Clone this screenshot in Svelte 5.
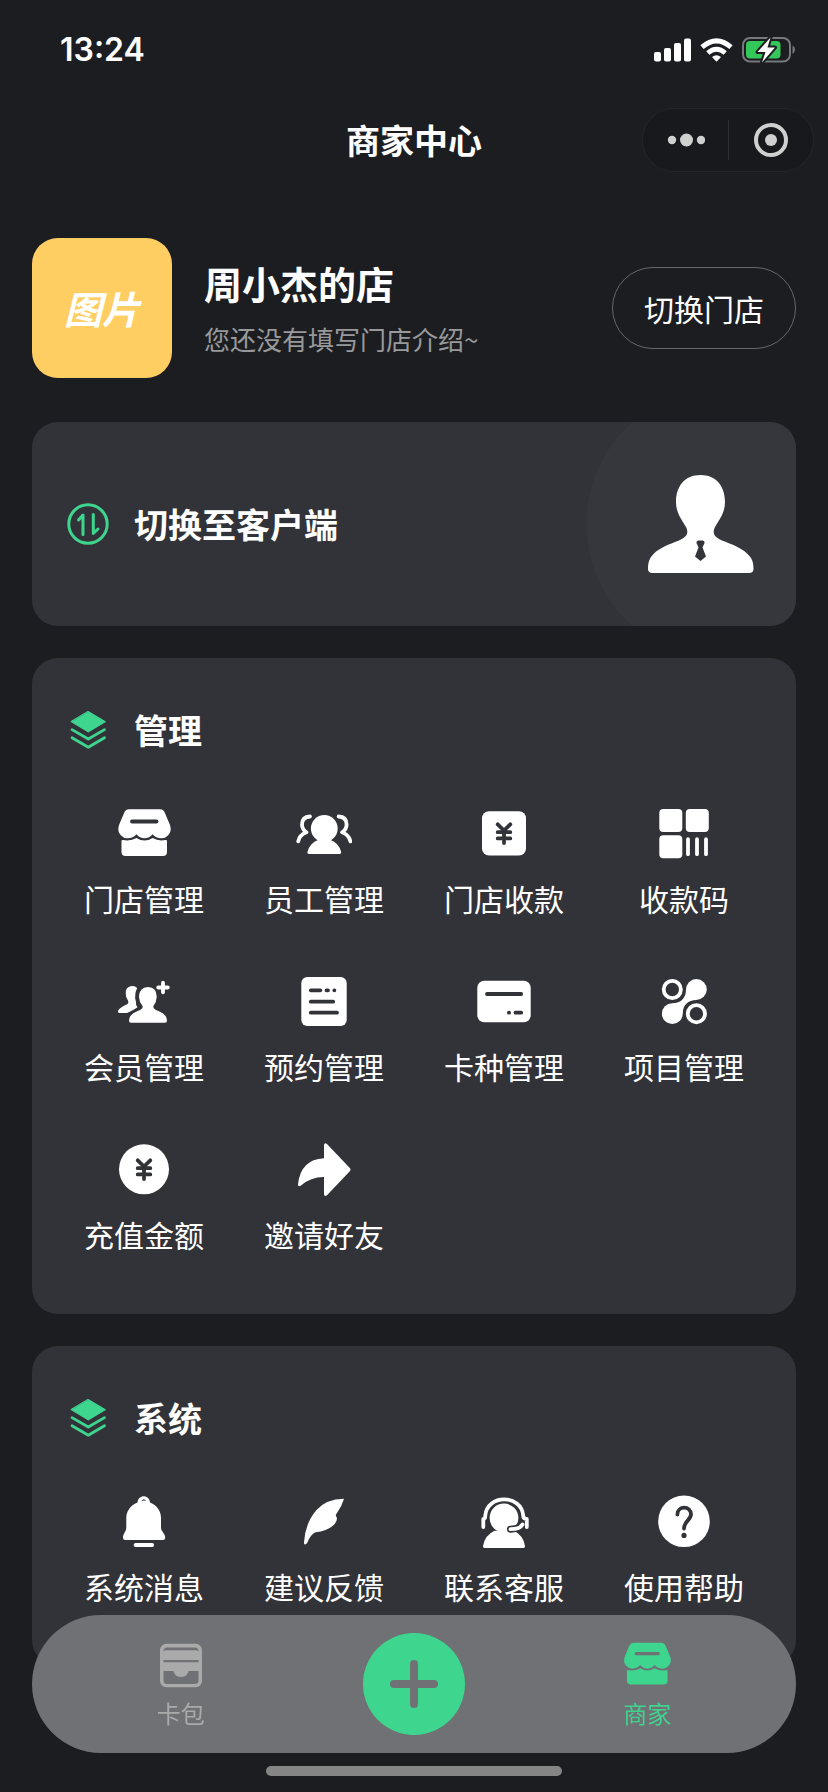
<script lang="ts">
  const manage = [
    { label: "门店管理", icon: "shop" },
    { label: "员工管理", icon: "staff" },
    { label: "门店收款", icon: "cash" },
    { label: "收款码", icon: "code" },
    { label: "会员管理", icon: "member" },
    { label: "预约管理", icon: "booking" },
    { label: "卡种管理", icon: "card" },
    { label: "项目管理", icon: "project" },
    { label: "充值金额", icon: "recharge" },
    { label: "邀请好友", icon: "share" },
  ];

  const system = [
    { label: "系统消息", icon: "bell" },
    { label: "建议反馈", icon: "feather" },
    { label: "联系客服", icon: "service" },
    { label: "使用帮助", icon: "help" },
  ];

  const groups = [
    { title: "管理", items: manage },
    { title: "系统", items: system },
  ];

  let tab = $state("shop");
</script>

{#snippet yen()}
  <path class="hole" d="M21.7 20.3L28 26.5L34.3 20.3M21.7 28.2H34.3M21.7 34.4H34.3M28 27V39" />
{/snippet}

{#snippet glyph(name: string)}
  <svg class="glyph" viewBox="0 0 56 56" aria-hidden="true">
    {#if name === "shop"}
      <path d="M13 5.3H44Q47.3 5.3 48.7 8.5L54 21Q56 27 52.2 31.2Q49.5 34.3 45.5 34.3Q39.8 34.3 36.6 30.3Q33.3 34.3 28.5 34.3Q23.7 34.3 20.5 30.3Q17.2 34.3 11.5 34.3Q7.5 34.3 4.8 31.2Q1 27 3 21L8.3 8.5Q9.7 5.3 13 5.3Z" />
      <path d="M5.5 37Q5.5 35.8 7 36Q14.5 37.5 20.5 34Q28.5 39 36.6 34Q42.5 37.5 49.5 36Q51 35.8 51 37V48Q51 52 47 52H9.5Q5.5 52 5.5 48Z" />
      <path class="hole" d="M16 17.5H40.5" />
    {:else if name === "staff"}
      <circle cx="28.3" cy="24.5" r="13.4" />
      <path d="M11.4 48Q14 38.5 23 35.5H33.6Q42.6 38.5 45.2 48Q45.5 50 43.5 50H13Q11 50 11.4 48Z" />
      <path class="line" d="M14 12.5Q6 13 6 20.5Q6 25.5 10.5 28.3Q3.5 31 2.2 37.3M42.6 12.5Q50.6 13 50.6 20.5Q50.6 25.5 46.1 28.3Q53 31 54.4 37.3" />
    {:else if name === "cash"}
      <rect x="6" y="7.2" width="44" height="44.4" rx="7" />
      {@render yen()}
    {:else if name === "code"}
      <rect x="3.3" y="5" width="23" height="23" rx="4" />
      <rect x="29.8" y="5" width="23" height="23" rx="4" />
      <rect x="3.3" y="31.3" width="23" height="23" rx="4" />
      <path class="line" d="M32 35.2V50.2M41 35.2V50.2M50 35.2V50.2" />
    {:else if name === "member"}
      <path d="M20.5 15.5Q18 13.5 14.5 14.2Q9.5 15.5 9.7 21Q9.5 25 12 28.5Q13.5 31.5 9.5 33Q2 36.5 2 39.5Q2 41 3.5 41H11Q15 39.5 21.5 35.3Q19.5 33.5 20 30Q18.5 26 19.5 20.5Q20 18 21.2 16.5Z" />
      <path d="M32 15Q41 15.5 40.7 25Q40.5 30 37.5 34Q36.5 36.5 40 38Q51 42 51 48.5Q51 50.7 49 50.7H15Q13 50.7 13 48.5Q13 42 24 38Q27.5 36.5 26.5 34Q23.2 30 23 25Q23 15.5 32 15Z" />
      <path class="line" d="M42.2 15.5H51.8M47 10.7V20.3" />
    {:else if name === "booking"}
      <rect x="5.3" y="5" width="45.4" height="49" rx="6" />
      <path class="hole" d="M14.8 18.3H24.3M30.5 18.3H32M38.3 18.3H38.4M14.8 29.7H37.2M14.8 40.7H41" />
    {:else if name === "card"}
      <rect x="1.3" y="8.7" width="53.4" height="41.6" rx="7" />
      <path class="hole" d="M11 22H45.2M32.9 40.7H33.1M39.5 40.7H45.2" />
    {:else if name === "project"}
      <circle class="line" cx="16.3" cy="17.5" r="8.6" />
      <circle class="line" cx="40.4" cy="41.7" r="8.6" />
      <circle cx="40.4" cy="17.5" r="10.4" />
      <circle cx="16.3" cy="41.7" r="10.4" />
      <path d="M30 17.5C30 26 25 31.3 16.3 31.3L26.7 41.7C26.7 33 32 27.9 40.4 27.9Z" />
    {:else if name === "recharge"}
      <circle cx="28" cy="29.3" r="25" />
      {@render yen()}
    {:else if name === "share"}
      <path d="M28 5Q28.5 2.2 31 4L53.8 28Q55.2 29.7 53.8 31.3L31 55.2Q28.5 57 28 54.5V37Q15 36.8 5 45.5Q2 47.3 2 44.5Q4.5 19.5 28 18.3Z" />
    {:else if name === "bell"}
      <path d="M21.5 10.5C22 2 33.5 2 34 10.5C41.5 13.5 45 19.5 45 26V35.5C45 39.5 49.2 41.5 49.2 45.5Q49.2 48 46.5 48H9.5Q7 48 7 45.5C7 41.5 10.3 39.5 10.3 35.5V26C10.3 19.5 14 13.5 21.5 10.5ZM25.5 9Q27.7 8.2 30 9Q29 7.2 27.7 7.2Q26.5 7.2 25.5 9Z" />
      <path class="line" d="M19.6 53H36.2" />
    {:else if name === "feather"}
      <path d="M48 6.7Q30 7 20.5 18Q9 31.5 8 50.5Q8 54 11 51.2Q14.5 42.5 19.5 40.3Q31 39 36.5 34Q42 29 40.6 25Q38.8 23.5 41 21Q45.5 15 48 6.7Z" />
    {:else if name === "service"}
      <circle cx="28" cy="26" r="14.4" />
      <path d="M7 54.2Q8.5 43.5 18.5 38.8H38Q47.5 43.5 49 54.2Q49.2 56 47.5 56H8.5Q6.8 56 7 54.2Z" />
      <path class="ring" d="M46 31.8Q44 36.8 34.5 37.2" />
      <path class="line" d="M7.3 35V27Q9.3 27 9.3 23.5C11 2 45.5 2 47.2 23.5Q47.2 27 50.8 27V35M46.5 32.5Q44 37 34.5 37.2" />
    {:else if name === "help"}
      <circle cx="28" cy="29.3" r="25.8" />
      <path class="hole" d="M21.4 22.5C21.4 13.5 35 13.5 35 22.3C35 28 28 29 28 36.5" />
      <circle class="dot" cx="28" cy="43.4" r="2.6" />
    {:else if name === "wallet"}
      <rect x="4.5" y="6.5" width="47" height="48.7" rx="7" />
      <path class="dot" d="M8.4 15Q8.4 10.7 12.4 10.7H43.6Q47.6 10.7 47.6 15Q46.6 13.6 44.6 13.6H11.4Q9.4 13.6 8.4 15ZM8.4 24.6H47.6V27.2H8.4ZM8.4 37H19.5C20.5 40 22 43.7 28 43.7S35.5 40 36.5 37H47.6V47.5Q47.6 51.5 43.6 51.5H12.4Q8.4 51.5 8.4 47.5Z" />
    {/if}
  </svg>
{/snippet}

<div class="page">
  <div class="status">
    <span class="time">13:24</span>
    <div class="signals">
      <svg width="37" height="24" viewBox="0 0 37 24" fill="#fff" aria-hidden="true">
        <rect x="0" y="14" width="7" height="9.5" rx="2" />
        <rect x="10" y="10" width="7" height="13.5" rx="2" />
        <rect x="20" y="5" width="7" height="18.5" rx="2" />
        <rect x="30" y="0.5" width="7" height="23" rx="2" />
      </svg>
      <svg width="33" height="24" viewBox="0 0 33 24" fill="none" stroke="#fff" aria-hidden="true">
        <path d="M2 9.2Q16.5 -3.5 31 9.2" stroke-width="5" />
        <path d="M7.8 15Q16.5 7.5 25.2 15" stroke-width="4.8" />
        <path d="M12 19Q16.5 15.5 21 19L16.5 23.7Z" fill="#fff" stroke="none" />
      </svg>
      <svg width="54" height="28" viewBox="0 0 54 28" aria-hidden="true">
        <rect x="1" y="2" width="47" height="23.5" rx="7" fill="none" stroke="#77787b" stroke-width="2" />
        <path d="M50.5 9.5Q53 10.5 53 13.7T50.5 18Z" fill="#77787b" />
        <rect x="4" y="5" width="34.5" height="17.5" rx="4" fill="#34c759" />
        <path d="M28.5 1.5L15.5 16H23.5L20 26.5L33 11.5H25.5Z" fill="#fff" stroke="#1c1d21" stroke-width="4" stroke-linejoin="round" paint-order="stroke" />
      </svg>
    </div>
  </div>

  <header>
    <h1>商家中心</h1>
    <div class="capsule">
      <button type="button" aria-label="更多">
        <svg width="38" height="14" viewBox="0 0 38 14" fill="#d0d0d0">
          <circle cx="5" cy="7" r="4.2" />
          <circle cx="19.5" cy="7" r="6.5" />
          <circle cx="34" cy="7" r="4.2" />
        </svg>
      </button>
      <button type="button" aria-label="关闭">
        <svg width="36" height="36" viewBox="0 0 36 36">
          <circle cx="18" cy="18" r="15" fill="none" stroke="#d0d0d0" stroke-width="4" />
          <circle cx="18" cy="18" r="6" fill="#d0d0d0" />
        </svg>
      </button>
    </div>
  </header>

  <main>
    <section class="profile">
      <div class="avatar">图片</div>
      <div class="info">
        <h2>周小杰的店</h2>
        <p>您还没有填写门店介绍~</p>
      </div>
      <button type="button" class="change">切换门店</button>
    </section>

    <a class="switch" href="#client">
      <svg class="mark" viewBox="0 0 44 44" fill="none" stroke="#3ed58f" stroke-width="3" stroke-linecap="round" stroke-linejoin="round" aria-hidden="true">
        <circle cx="22" cy="22" r="19.2" />
        <path d="M12.5 18L17 13V32.5M27.3 12.5V31.5L32 27" />
      </svg>
      <span>切换至客户端</span>
      <svg class="person" viewBox="0 0 106 98" aria-hidden="true">
        <path fill="#fff" d="M52.5 0C68 0 77 11 77 27C77 38 71 45 67 52C64 58 66 62 74 65.5C83 69 93 72.5 99 78.5C104 83 105.5 87 105.5 94Q105.5 98 101 98H4.5Q0 98 0 94C0 87 1.5 83 6 78.5C12 72.5 22 69 31 65.5C39 62 41 58 38 52C34 45 28 38 28 27C28 11 37 0 52.5 0Z" />
        <path fill="#34353a" d="M50 65.5H55Q57 66 56.5 68L54.5 72.5L58 81.5L52.5 86L47 81.5L50.5 72.5L48.5 68Q48 66 50 65.5Z" />
      </svg>
    </a>

    {#each groups as group}
      <section class="card">
        <h2>
          <svg class="mark" viewBox="-2 -2 44 44" fill="none" stroke="#3ed58f" stroke-width="2.8" stroke-linecap="round" stroke-linejoin="round" aria-hidden="true">
            <path fill="#3ed58f" stroke-width="1" d="M20.3 1.5L37.5 11.7L20.3 22L3.2 11.7Z" />
            <path d="M4 19.6L20.3 29L36.5 19.6M4 27.8L20.3 37.2L36.5 27.8" />
          </svg>
          {group.title}
        </h2>
        <div class="grid">
          {#each group.items as item}
            <a href="#{item.icon}">
              {@render glyph(item.icon)}
              <span>{item.label}</span>
            </a>
          {/each}
        </div>
      </section>
    {/each}
  </main>

  <div class="dock">
    <nav>
      <button type="button" class="tab" class:active={tab === "wallet"} onclick={() => (tab = "wallet")}>
        {@render glyph("wallet")}
        <span>卡包</span>
      </button>
      <button type="button" class="add" aria-label="新增">
        <svg width="48" height="48" viewBox="0 0 48 48" stroke="#707175" stroke-width="8" stroke-linecap="round">
          <path d="M4 24H44M24 4V44" />
        </svg>
      </button>
      <button type="button" class="tab" class:active={tab === "shop"} onclick={() => (tab = "shop")}>
        {@render glyph("shop")}
        <span>商家</span>
      </button>
    </nav>
    <div class="home"></div>
  </div>
</div>

<style>
  :global(body) {
    margin: 0;
    background: #1c1d21;
  }

  .page {
    --surface: #323338;
    min-height: 100vh;
    color: #fff;
    font-family: "Noto Sans CJK SC", sans-serif;
    font-size: 30px;
  }

  h1,
  h2,
  p {
    margin: 0;
  }

  a {
    color: inherit;
    text-decoration: none;
  }

  button {
    padding: 0;
    border: 0;
    background: none;
    color: inherit;
    font: inherit;
    cursor: pointer;
  }

  svg {
    display: block;
    flex: none;
  }

  .status {
    display: flex;
    justify-content: space-between;
    align-items: center;
    padding: 30px 32px 30px 60px;
  }

  .time {
    font-family: Inter, sans-serif;
    font-size: 32px;
    font-weight: 600;
    line-height: 40px;
  }

  .signals {
    display: flex;
    align-items: center;
    gap: 9px;
  }

  header {
    display: grid;
    grid-template-columns: 1fr auto 1fr;
    align-items: center;
    padding: 8px 14px;
  }

  h1 {
    grid-column: 2;
    font-size: 34px;
    font-weight: 700;
    line-height: 48px;
  }

  .capsule {
    display: flex;
    justify-self: end;
    padding: 11px 0;
    border: 1px solid #24252a;
    border-radius: 32px;
    background: #18191d;
  }

  .capsule button {
    display: grid;
    place-items: center;
    width: 85px;
    height: 40px;
  }

  .capsule button + button {
    border-left: 1px solid #2f3034;
  }

  main {
    display: flex;
    flex-direction: column;
    gap: 32px;
    padding: 58px 32px 0;
  }

  .profile {
    display: flex;
    align-items: center;
    margin-bottom: 12px;
  }

  .avatar {
    display: grid;
    place-items: center;
    width: 140px;
    height: 140px;
    border-radius: 26px;
    background: #ffce63;
    font-size: 38px;
    font-style: italic;
    font-weight: 700;
    line-height: 48px;
  }

  .info {
    flex: 1;
    padding-left: 32px;
  }

  .info h2 {
    font-size: 38px;
    font-weight: 700;
    line-height: 52px;
  }

  .info p {
    margin-top: 10px;
    color: #98999b;
    font-size: 26px;
    line-height: 40px;
  }

  .change {
    padding: 18px 31px;
    border: 1px solid #67686b;
    border-radius: 41px;
    line-height: 44px;
  }

  .switch {
    display: flex;
    align-items: center;
    gap: 24px;
    padding: 53px 42px 53px 34px;
    border-radius: 26px;
    background: radial-gradient(circle at calc(100% - 74px) 50%, #36373c 135px, var(--surface) 136px);
    font-size: 34px;
    font-weight: 700;
    line-height: 48px;
  }

  .mark {
    width: 44px;
    height: 44px;
  }

  .person {
    width: 106px;
    height: 98px;
    margin-left: auto;
  }

  .card {
    padding: 48px 22px 58px;
    border-radius: 26px;
    background: var(--surface);
  }

  .card h2 {
    display: flex;
    align-items: center;
    gap: 24px;
    margin: 0 12px 50px;
    font-size: 34px;
    font-weight: 700;
    line-height: 48px;
  }

  .grid {
    display: grid;
    grid-template-columns: repeat(4, 1fr);
    row-gap: 52px;
  }

  .grid a {
    display: flex;
    flex-direction: column;
    align-items: center;
    gap: 16px;
    line-height: 44px;
  }

  .glyph {
    width: 56px;
    height: 56px;
    fill: currentColor;
  }

  .line {
    fill: none;
    stroke: currentColor;
    stroke-width: 3.8;
    stroke-linecap: round;
    stroke-linejoin: round;
  }

  .hole {
    fill: none;
    stroke: var(--surface);
    stroke-width: 3.8;
    stroke-linecap: round;
    stroke-linejoin: round;
  }

  .ring {
    fill: none;
    stroke: var(--surface);
    stroke-width: 7;
    stroke-linecap: round;
  }

  .dot {
    fill: var(--surface);
  }

  .dock {
    position: fixed;
    right: 32px;
    bottom: 16px;
    left: 32px;
  }

  nav {
    --surface: #707175;
    display: grid;
    grid-template-columns: repeat(3, 1fr);
    align-items: center;
    justify-items: center;
    padding: 18px 32px;
    border-radius: 69px;
    background: var(--surface);
  }

  .tab {
    display: flex;
    flex-direction: column;
    align-items: center;
    gap: 8px;
    color: #aaaaab;
    font-size: 24px;
    line-height: 34px;
  }

  .tab .glyph {
    width: 50px;
    height: 50px;
  }

  .tab.active {
    color: #3ed58f;
  }

  .add {
    display: grid;
    place-items: center;
    width: 102px;
    height: 102px;
    border-radius: 50%;
    background: #3ed58f;
  }

  .home {
    width: 296px;
    height: 10px;
    margin: 13px auto 0;
    border-radius: 5px;
    background: #858585;
  }
</style>
